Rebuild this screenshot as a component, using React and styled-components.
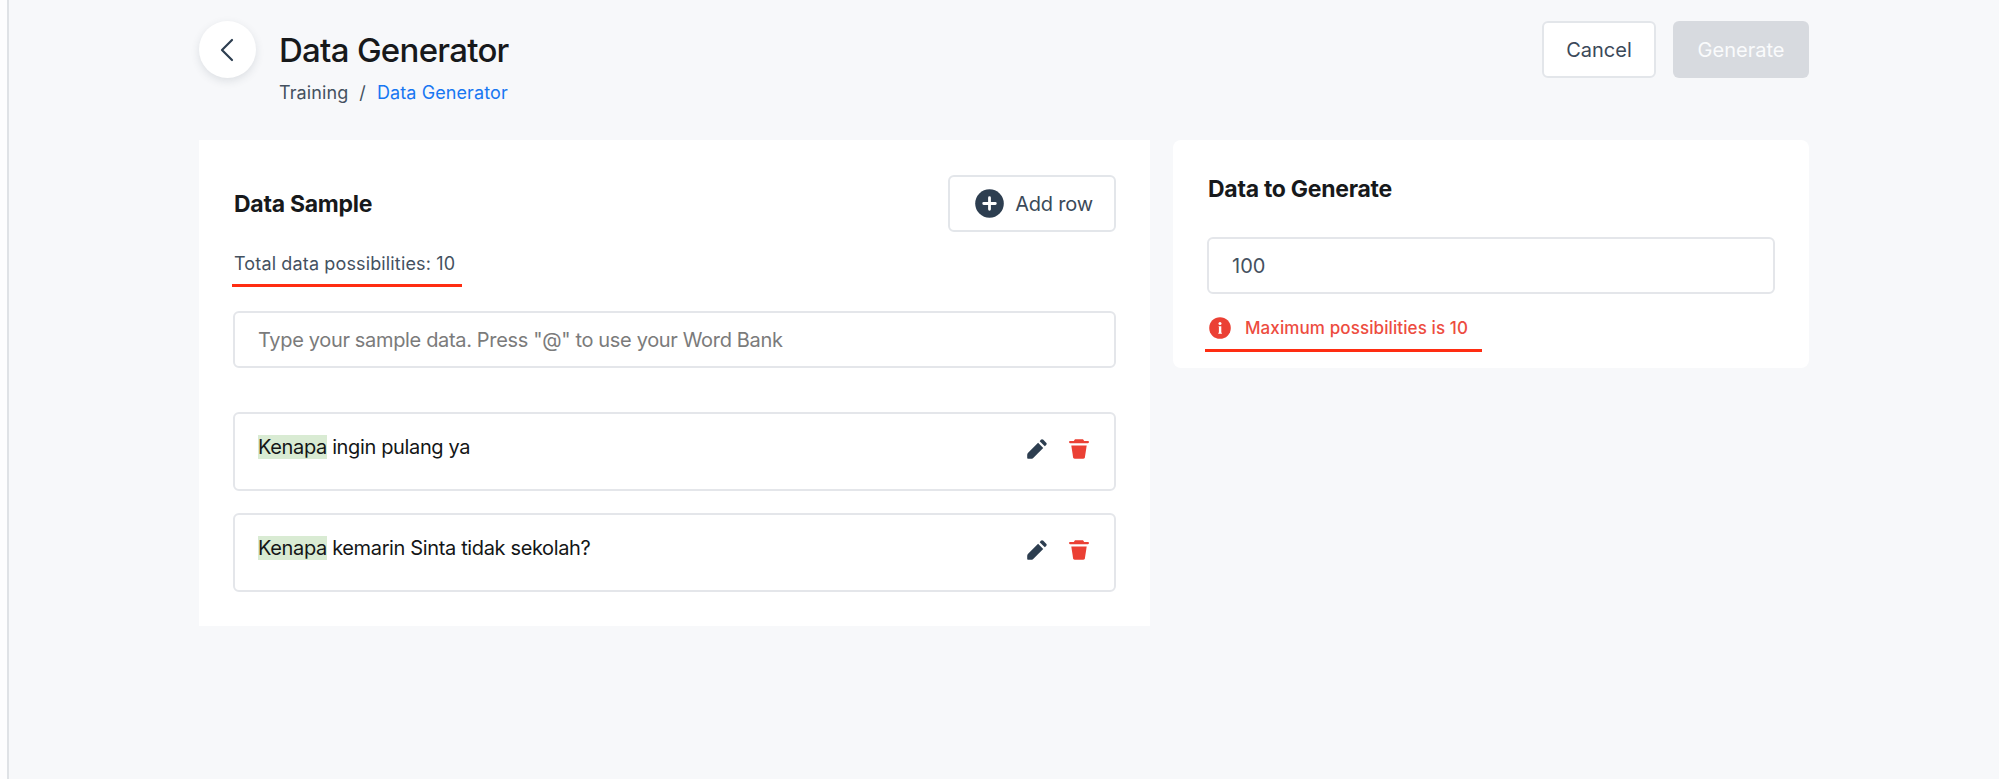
import React from "react";
import styled, { createGlobalStyle } from "styled-components";

const Global = createGlobalStyle`
  * { box-sizing: border-box; }
  body { margin: 0; background: #f7f8fa; font-family: Inter, "Liberation Sans", sans-serif; color: #2d3e50; }
  h1, h2, p { margin: 0; }
  button, input { font: inherit; color: inherit; }
`;

const Edge = styled.div`
  background: #fdfdfe;
`;

const Page = styled.div`
  height: 779px;
  margin-left: 7px;
  border-left: 2px solid #dfe2e6;
  padding: 21px 190px 0 190px;
  background: #f7f8fa;
  overflow: hidden;
`;

const Header = styled.header`
  display: flex;
  align-items: flex-start;
  height: 119px;
`;

const BackButton = styled.button`
  display: flex;
  align-items: center;
  justify-content: center;
  width: 57px;
  height: 57px;
  padding: 0 1px 0 0;
  border: 0;
  border-radius: 50%;
  background: #fff;
  box-shadow: 0 3px 8px rgba(45, 62, 80, 0.13);
`;

const Heading = styled.div`
  flex: 1;
  padding: 9px 0 0 23px;
`;

const Title = styled.h1`
  font-size: 33px;
  line-height: 40px;
  font-weight: 500;
  letter-spacing: -0.72px;
  color: #17191b;
`;

const Breadcrumb = styled.nav`
  display: flex;
  gap: 11px;
  margin-top: 12px;
  font-size: 18px;
  line-height: 22px;
  letter-spacing: 0.1px;
  color: #44515f;
`;

const Crumb = styled.a`
  color: ${(p) => (p.$active ? "#1877f2" : "inherit")};
`;

const Actions = styled.div`
  display: flex;
  gap: 17px;
`;

const Button = styled.button`
  display: flex;
  align-items: center;
  justify-content: center;
  gap: 11px;
  width: ${(p) => p.$width}px;
  height: 57px;
  padding: 0 0 0 ${(p) => p.$shift || 0}px;
  border: ${(p) => (p.$muted ? "0" : "2px solid #e3e6ea")};
  border-radius: 6px;
  background: ${(p) => (p.$muted ? "#d7dadf" : "#fff")};
  color: ${(p) => (p.$muted ? "#fafbfc" : "#3b4959")};
  font-size: 20px;
  line-height: 24px;
  letter-spacing: ${(p) => p.$spacing || 0}px;
`;

const Columns = styled.main`
  display: grid;
  grid-template-columns: 951px 636px;
  column-gap: 23px;
  align-items: start;
`;

const Card = styled.section`
  height: ${(p) => p.$height}px;
  padding: 35px 34px 34px;
  border-radius: ${(p) => p.$radius || 0}px;
  background: #fff;
`;

const CardHeader = styled.div`
  display: flex;
  align-items: center;
  justify-content: space-between;
  height: 57px;
`;

const CardTitle = styled.h2`
  margin-bottom: ${(p) => p.$gap || 0}px;
  padding-left: 1px;
  font-size: 23px;
  line-height: 28px;
  font-weight: 700;
  letter-spacing: -0.28px;
  color: #17191b;
`;

const Underlined = styled.div`
  display: flex;
  align-items: center;
  width: ${(p) => p.$width}px;
  height: ${(p) => p.$height}px;
  margin: ${(p) => p.$margin};
  padding: ${(p) => p.$padding};
  border-bottom: 3px solid #ff2d12;
`;

const Total = styled.p`
  font-size: 18px;
  line-height: 22px;
  letter-spacing: 0.14px;
  color: #44515f;
  white-space: nowrap;
`;

const Input = styled.input`
  display: block;
  width: 100%;
  height: 57px;
  padding: 0 23px;
  border: 2px solid #e4e6ea;
  border-radius: 6px;
  outline: 0;
  background: #fff;
  color: #44515f;
  font-size: 20px;
  &::placeholder { color: #7b7b7b; opacity: 1; letter-spacing: -0.34px; }
`;

const Samples = styled.div`
  display: flex;
  flex-direction: column;
  gap: 22px;
  margin-top: 44px;
`;

const Sample = styled.div`
  display: flex;
  justify-content: space-between;
  height: 79px;
  padding: 21px 25px 0 23px;
  border: 2px solid #e4e6ea;
  border-radius: 6px;
`;

const SampleText = styled.p`
  font-size: 20px;
  line-height: 25px;
  letter-spacing: -0.36px;
  color: #141617;
`;

const Mark = styled.span`
  background: #d9ebd3;
`;

const Tools = styled.div`
  display: flex;
  gap: 22px;
  padding-top: 4px;
  svg { display: block; }
`;

const ErrorText = styled.p`
  margin-left: 14px;
  font-size: 17px;
  line-height: 21px;
  font-weight: 500;
  letter-spacing: 0.1px;
  color: #ed4c40;
  white-space: nowrap;
`;

const BackIcon = () => (
  <svg width="14" height="24" viewBox="0 0 14 24" fill="none" stroke="#2d3e50" strokeWidth="2.2" strokeLinecap="round" strokeLinejoin="round">
    <path d="M12 2 2 12l10 10" />
  </svg>
);

const PlusIcon = () => (
  <svg width="29" height="29" viewBox="0 0 30 30">
    <circle cx="15" cy="15" r="14.8" fill="#2d3e50" />
    <path d="M15 9v12M9 15h12" stroke="#fff" strokeWidth="2.9" strokeLinecap="round" />
  </svg>
);

const PencilIcon = () => (
  <svg width="20" height="20" viewBox="0 0 20 20" fill="#2d3e50">
    <path d="M11.1 3.8 16.2 8.9 6.2 18.9Q5.3 19.8 4 19.8H1Q.2 19.8.2 19V16Q.2 14.7 1.1 13.8Z" />
    <path d="M12.7 2.2 13.6 1.1Q14.9-.2 16.3.8L19.2 3.7Q20.2 4.8 19.2 5.9L17.8 7.3Z" />
  </svg>
);

const TrashIcon = () => (
  <svg width="20" height="20" viewBox="0 0 20 20" fill="#eb4034">
    <path d="M6 .3h8l1.2 1.7H19Q20 2 20 3.1t-1 1.1H1Q0 4.2 0 3.1T1 2H4.8Z" />
    <path d="M2.3 6.5H17.7L15.9 18.3Q15.6 19.8 14 19.8H6Q4.4 19.8 4.1 18.3Z" />
  </svg>
);

const InfoIcon = () => (
  <svg width="22" height="22" viewBox="0 0 22 22">
    <circle cx="11" cy="11" r="10.8" fill="#eb4034" />
    <circle cx="11" cy="6.6" r="1.5" fill="#fff" />
    <path d="M9.6 9.2h2.7v6.6h.6v.9H9.3v-.9h.6v-5.7h-.3Z" fill="#fff" />
  </svg>
);

const samples = ["ingin pulang ya", "kemarin Sinta tidak sekolah?"];

export default function App() {
  return (
    <Edge>
      <Global />
      <Page>
        <Header>
          <BackButton aria-label="Back"><BackIcon /></BackButton>
          <Heading>
            <Title>Data Generator</Title>
            <Breadcrumb>
              <Crumb>Training</Crumb>
              <span>/</span>
              <Crumb $active>Data Generator</Crumb>
            </Breadcrumb>
          </Heading>
          <Actions>
            <Button $width={114}>Cancel</Button>
            <Button $width={136} $muted>Generate</Button>
          </Actions>
        </Header>
        <Columns>
          <Card $height={486}>
            <CardHeader>
              <CardTitle>Data Sample</CardTitle>
              <Button $width={168} $shift={4} $spacing={-0.2}><PlusIcon />Add row</Button>
            </CardHeader>
            <Underlined $width={230} $height={35} $margin="20px 0 24px -1px" $padding="0 0 8px 2px">
              <Total>Total data possibilities: 10</Total>
            </Underlined>
            <Input placeholder={'Type your sample data. Press "@" to use your Word Bank'} />
            <Samples>
              {samples.map((text) => (
                <Sample key={text}>
                  <SampleText><Mark>Kenapa</Mark> {text}</SampleText>
                  <Tools><PencilIcon /><TrashIcon /></Tools>
                </Sample>
              ))}
            </Samples>
          </Card>
          <Card $height={228} $radius={8}>
            <CardTitle $gap={34}>Data to Generate</CardTitle>
            <Input defaultValue="100" />
            <Underlined $width={277} $height={41} $margin="17px 0 0 -2px" $padding="0 0 4px 4px">
              <InfoIcon />
              <ErrorText>Maximum possibilities is 10</ErrorText>
            </Underlined>
          </Card>
        </Columns>
      </Page>
    </Edge>
  );
}
